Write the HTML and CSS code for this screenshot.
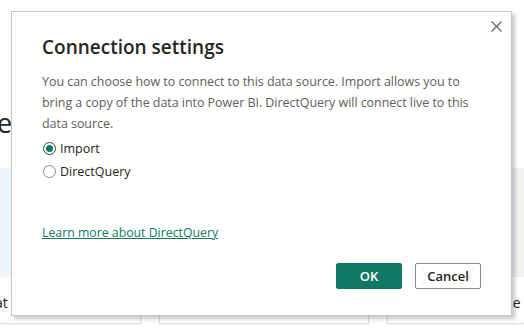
FILE: index.html
```html
<!DOCTYPE html>
<html>
<head>
  <title>Connection settings</title>
  <link rel="stylesheet" href="styles.css">
</head>
<body>
  <div class="page">
    <div class="heading">e</div>
    <div class="band">
      <div class="band-left"></div>
      <div class="band-right"></div>
    </div>
    <div class="cards">
      <div class="card card-a"><span>at</span></div>
      <div class="card card-b"></div>
      <div class="card card-c"><span>se</span></div>
    </div>
  </div>

  <div class="dialog">
    <button class="close" aria-label="Close">
      <svg width="11" height="11" viewBox="0 0 11 11">
        <path d="M0.5 0.5 L10.5 10.5 M10.5 0.5 L0.5 10.5" stroke="#605e5c" stroke-width="1.1" fill="none"/>
      </svg>
    </button>
    <h1>Connection settings</h1>
    <p class="intro">You can choose how to connect to this data source. Import allows you to bring a copy of the data into Power BI. DirectQuery will connect live to this data source.</p>

    <div class="options">
      <label class="option">
        <span class="radio checked"></span>
        Import
      </label>
      <label class="option">
        <span class="radio"></span>
        DirectQuery
      </label>
    </div>

    <a class="learn" href="#">Learn more about DirectQuery</a>

    <div class="actions">
      <button class="btn btn-primary">OK</button>
      <button class="btn">Cancel</button>
    </div>
  </div>
</body>
</html>
```

FILE: styles.css
```css
html, body {
  margin: 0;
  padding: 0;
  height: 100%;
}

body {
  font-family: "Open Sans", "Noto Sans", Arial, sans-serif;
  background-color: #fff;
  color: #252423;
  overflow: hidden;
  position: relative;
}

.page {
  width: 524px;
  height: 333px;
}

.heading {
  padding-top: 108px;
  height: 60px;
  font-size: 27px;
  line-height: 30px;
  margin-left: -3px;
  color: #252423;
}

.band {
  display: flex;
  height: 109px;
}

.band-left {
  flex: 1;
  background-color: #eff6fc;
}

.band-right {
  width: 10px;
  background-color: #f3f2f1;
}

.cards {
  display: flex;
  gap: 18px;
  height: 47px;
}

.card {
  border: 1px solid #e1dfdd;
  border-top: none;
  background-color: #fff;
  box-shadow: 0 1px 2px rgba(0, 0, 0, 0.06);
  font-size: 14px;
  line-height: 20px;
  padding-top: 16px;
  box-sizing: border-box;
  overflow: hidden;
  white-space: nowrap;
}

.card-a {
  width: 141px;
  border-left: none;
}

.card-a span {
  display: block;
  margin-left: -5px;
}

.card-b {
  width: 210px;
}

.card-c {
  flex: 1;
  border-right: none;
}

.card-c span {
  display: block;
  margin-left: 118px;
}

.dialog {
  position: absolute;
  left: 11px;
  top: 11px;
  width: 501px;
  height: 305px;
  box-sizing: border-box;
  background-color: #fff;
  border: 1px solid #c8c6c4;
  box-shadow: 3px 3px 4px rgba(0, 0, 0, 0.22);
  padding: 21px 30px 26px 30px;
  display: flex;
  flex-direction: column;
}

.close {
  position: absolute;
  right: 8px;
  top: 8px;
  width: 13px;
  height: 13px;
  padding: 1px;
  border: none;
  background: none;
  cursor: pointer;
  display: flex;
}

h1 {
  margin: 0;
  font-size: 19px;
  font-weight: 600;
  line-height: 28px;
  color: #252423;
}

.intro {
  margin: 10px 0 0 0;
  font-size: 12.5px;
  letter-spacing: -0.05px;
  line-height: 21px;
  color: #605e5c;
}

.options {
  margin-top: 5px;
  display: flex;
  flex-direction: column;
  gap: 4px;
}

.option {
  display: flex;
  align-items: center;
  gap: 4px;
  font-size: 12.5px;
  line-height: 19px;
  color: #252423;
}

.radio {
  width: 11px;
  height: 11px;
  border: 1px solid #8a8886;
  border-radius: 50%;
  display: flex;
  align-items: center;
  justify-content: center;
  margin-left: 1px;
}

.radio.checked {
  border-color: #1e4b43;
}

.radio.checked::after {
  content: "";
  width: 7px;
  height: 7px;
  border-radius: 50%;
  background-color: #117865;
}

.learn {
  margin-top: 42px;
  align-self: flex-start;
  font-size: 12.3px;
  line-height: 19px;
  color: #117865;
}

.actions {
  margin-top: auto;
  display: flex;
  justify-content: flex-end;
  gap: 13px;
}

.btn {
  font-family: inherit;
  width: 66px;
  height: 26px;
  font-size: 13px;
  font-weight: 600;
  border: 1px solid #8a8886;
  border-radius: 2px;
  background-color: #fff;
  color: #252423;
  cursor: pointer;
  padding: 0;
}

.btn-primary {
  background-color: #117865;
  border-color: #117865;
  color: #fff;
}
```
